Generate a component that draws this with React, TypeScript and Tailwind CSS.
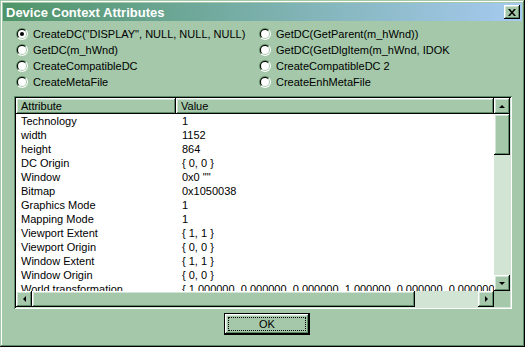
const FACE = "#a4c8a9";

const raised =
  "bg-[#a4c8a9] shadow-[inset_-1px_-1px_#000,inset_1px_1px_#ffffff,inset_-2px_-2px_#5e8c66,inset_2px_2px_#d2e4d4]";

const options: [string, string][] = [
  ['CreateDC("DISPLAY", NULL, NULL, NULL)', "GetDC(GetParent(m_hWnd))"],
  ["GetDC(m_hWnd)", "GetDC(GetDlgItem(m_hWnd, IDOK"],
  ["CreateCompatibleDC", "CreateCompatibleDC 2"],
  ["CreateMetaFile", "CreateEnhMetaFile"],
];

const rows: [string, string][] = [
  ["Technology", "1"],
  ["width", "1152"],
  ["height", "864"],
  ["DC Origin", "{ 0, 0 }"],
  ["Window", '0x0 ""'],
  ["Bitmap", "0x1050038"],
  ["Graphics Mode", "1"],
  ["Mapping Mode", "1"],
  ["Viewport Extent", "{ 1, 1 }"],
  ["Viewport Origin", "{ 0, 0 }"],
  ["Window Extent", "{ 1, 1 }"],
  ["Window Origin", "{ 0, 0 }"],
  [
    "World transformation",
    "{ 1.000000, 0.000000, 0.000000, 1.000000, 0.000000, 0.000000 }",
  ],
];

const Radio = ({ checked, id }: { checked?: boolean; id: string }) => (
  <svg width="12" height="12" viewBox="0 0 12 12" className="shrink-0">
    <defs>
      <clipPath id={`tl-${id}`}>
        <polygon points="0,0 12,0 0,12" />
      </clipPath>
      <clipPath id={`br-${id}`}>
        <polygon points="12,0 12,12 0,12" />
      </clipPath>
    </defs>
    <circle cx="6" cy="6" r="6" fill="#5e8c66" clipPath={`url(#tl-${id})`} />
    <circle cx="6" cy="6" r="6" fill="#ffffff" clipPath={`url(#br-${id})`} />
    <circle cx="6" cy="6" r="5" fill="#000" clipPath={`url(#tl-${id})`} />
    <circle cx="6" cy="6" r="5" fill={FACE} clipPath={`url(#br-${id})`} />
    <circle cx="6" cy="6" r="4" fill="#ffffff" />
    {checked && <circle cx="6" cy="6" r="2" fill="#000" />}
  </svg>
);

const Arrow = ({ dir }: { dir: "up" | "down" | "left" | "right" }) => {
  const pts = {
    up: "1,4 7,4 4,1",
    down: "1,1 7,1 4,4",
    left: "4,1 4,7 1,4",
    right: "1,1 1,7 4,4",
  }[dir];
  const vertical = dir === "up" || dir === "down";
  return (
    <svg
      width={vertical ? 8 : 5}
      height={vertical ? 5 : 8}
      viewBox={vertical ? "0 0 8 5" : "0 0 5 8"}
    >
      <polygon points={pts} fill="#000" />
    </svg>
  );
};

export default function App() {
  return (
    <div
      className="w-[525px] h-[347px] bg-[#a4c8a9] flex flex-col text-[11px] text-black shadow-[inset_-1px_-1px_#000,inset_1px_1px_#a4c8a9,inset_-2px_-2px_#5e8c66,inset_2px_2px_#ffffff]"
      style={{ fontFamily: '"Liberation Sans", Arial, sans-serif' }}
    >
      {/* title bar */}
      <div className="mx-[3px] mt-[3px] h-[18px] flex items-center justify-between pl-[3px] pr-[2px] bg-gradient-to-r from-[#4f9468] to-[#a6caf0]">
        <span className="text-white font-bold text-[13px] leading-none">
          Device Context Attributes
        </span>
        <div className={`w-[16px] h-[14px] flex items-center justify-center ${raised}`}>
          <svg width="8" height="7" viewBox="0 0 8 7">
            <path d="M0 0h2l2 2.5L6 0h2L5 3.5 8 7H6L4 4.5 2 7H0l3-3.5z" fill="#000" />
          </svg>
        </div>
      </div>

      {/* radio options */}
      <div className="mt-[5px] pl-[16px] flex flex-col">
        {options.map(([a, b], i) => (
          <div key={a} className="h-[16px] flex items-center">
            <div className="w-[243px] flex items-center gap-[5px]">
              <Radio id={`a${i}`} checked={i === 0} />
              <span className="whitespace-nowrap">{a}</span>
            </div>
            <div className="flex items-center gap-[5px]">
              <Radio id={`b${i}`} />
              <span className="whitespace-nowrap">{b}</span>
            </div>
          </div>
        ))}
      </div>

      {/* list view */}
      <div className="mt-[6px] ml-[14px] w-[498px] h-[213px] p-[2px] shadow-[inset_1px_1px_#5e8c66,inset_-1px_-1px_#ffffff,inset_2px_2px_#000,inset_-2px_-2px_#d2e4d4] flex flex-col">
        <div className="flex flex-1 min-h-0">
          <div className="flex-1 min-w-0 flex flex-col bg-white overflow-hidden">
            <div className="flex h-[16px] shrink-0">
              <div className={`w-[160px] pl-[5px] flex items-center ${raised}`}>Attribute</div>
              <div className={`flex-1 pl-[5px] flex items-center ${raised}`}>Value</div>
            </div>
            <div className="flex-1 min-h-0 overflow-hidden">
              {rows.map(([k, v]) => (
                <div key={k} className="h-[14px] flex items-center whitespace-nowrap">
                  <span className="w-[160px] pl-[5px] shrink-0">{k}</span>
                  <span className="pl-[6px]">{v}</span>
                </div>
              ))}
            </div>
          </div>
          {/* vertical scrollbar */}
          <div className="w-[16px] flex flex-col bg-[#d2e4d4]">
            <div className={`h-[16px] flex items-center justify-center ${raised}`}>
              <Arrow dir="up" />
            </div>
            <div className={`h-[41px] ${raised}`} />
            <div className="flex-1" />
            <div className={`h-[16px] flex items-center justify-center ${raised}`}>
              <Arrow dir="down" />
            </div>
          </div>
        </div>
        {/* horizontal scrollbar */}
        <div className="h-[16px] flex shrink-0">
          <div className="flex-1 flex bg-[#d2e4d4]">
            <div className={`w-[16px] flex items-center justify-center ${raised}`}>
              <Arrow dir="left" />
            </div>
            <div className={`w-[383px] ${raised}`} />
            <div className="flex-1" />
            <div className={`w-[16px] flex items-center justify-center ${raised}`}>
              <Arrow dir="right" />
            </div>
          </div>
          <div className="w-[16px] bg-[#a4c8a9]" />
        </div>
      </div>

      {/* OK button */}
      <div className="mt-[4px] ml-[224px] w-[86px] h-[22px] border border-black">
        <div className={`w-full h-full p-[3px] ${raised}`}>
          <div className="w-full h-full border border-dotted border-black flex items-center justify-center">
            OK
          </div>
        </div>
      </div>
    </div>
  );
}
